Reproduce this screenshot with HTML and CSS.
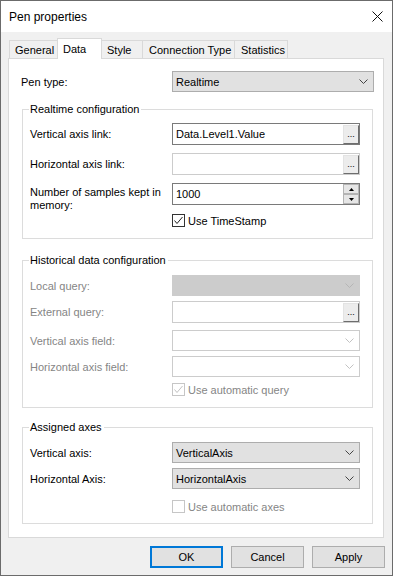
FILE: index.html
```html
<!DOCTYPE html>
<html lang="en">
<head>
    <meta charset="UTF-8">
    <meta name="viewport" content="width=device-width, initial-scale=1.0">
    <title>Pen properties</title>
    <link rel="stylesheet" href="styles.css">
</head>
<body>
    <div class="window">
        <div class="titlebar">
            <span class="title">Pen properties</span>
            <svg class="close" width="11" height="11" viewBox="0 0 11 11"><path d="M0.5 0.5L10.5 10.5M10.5 0.5L0.5 10.5" stroke="#111" stroke-width="1" fill="none"/></svg>
        </div>

        <div class="tabs">
            <div class="tab tab-general">General</div>
            <div class="tab tab-data active">Data</div>
            <div class="tab tab-style">Style</div>
            <div class="tab tab-conn">Connection Type</div>
            <div class="tab tab-stats">Statistics</div>
        </div>

        <div class="panel">
            <div class="pen-type">
                <span class="label">Pen type:</span>
                <div class="combo">
                    <span>Realtime</span>
                    <svg class="chev" width="9" height="5" viewBox="0 0 9 5"><polyline points="0.5,0.5 4.5,4.5 8.5,0.5" fill="none" stroke="#444"/></svg>
                </div>
            </div>

            <!-- realtime -->
            <fieldset class="group group-realtime">
                <legend>Realtime configuration</legend>
                <div class="field">
                    <span class="label">Vertical axis link:</span>
                    <div class="textbox">
                        <span class="value">Data.Level1.Value</span>
                        <span class="dots">...</span>
                    </div>
                </div>
                <div class="field mt-8">
                    <span class="label">Horizontal axis link:</span>
                    <div class="textbox light">
                        <span class="value"></span>
                        <span class="dots">...</span>
                    </div>
                </div>
                <div class="field field-tall mt-8">
                    <span class="label label-top">Number of samples kept in memory:</span>
                    <div class="textbox">
                        <span class="value">1000</span>
                        <span class="spin">
                            <span><svg width="5" height="3" viewBox="0 0 5 3"><polygon points="2.5,0 5,3 0,3" fill="#000"/></svg></span>
                            <span><svg width="5" height="3" viewBox="0 0 5 3"><polygon points="0,0 5,0 2.5,3" fill="#000"/></svg></span>
                        </span>
                    </div>
                </div>
                <div class="field mt-9">
                    <span></span>
                    <div class="check">
                        <span class="box"><svg width="11" height="11" viewBox="0 0 11 11"><polyline points="1.5,5.5 4,8.5 9.5,2" fill="none" stroke="#222"/></svg></span>
                        <span>Use TimeStamp</span>
                    </div>
                </div>
            </fieldset>

            <!-- historical -->
            <fieldset class="group group-history disabled">
                <legend>Historical data configuration</legend>
                <div class="field">
                    <span class="label">Local query:</span>
                    <div class="combo off">
                        <span></span>
                        <svg class="chev" width="9" height="5" viewBox="0 0 9 5"><polyline points="0.5,0.5 4.5,4.5 8.5,0.5" fill="none" stroke="#b5b5b5"/></svg>
                    </div>
                </div>
                <div class="field mt-5">
                    <span class="label">External query:</span>
                    <div class="textbox light">
                        <span class="value"></span>
                        <span class="dots">...</span>
                    </div>
                </div>
                <div class="field mt-7">
                    <span class="label">Vertical axis field:</span>
                    <div class="combo blank">
                        <span></span>
                        <svg class="chev" width="9" height="5" viewBox="0 0 9 5"><polyline points="0.5,0.5 4.5,4.5 8.5,0.5" fill="none" stroke="#c2c2c2"/></svg>
                    </div>
                </div>
                <div class="field mt-5">
                    <span class="label">Horizontal axis field:</span>
                    <div class="combo blank">
                        <span></span>
                        <svg class="chev" width="9" height="5" viewBox="0 0 9 5"><polyline points="0.5,0.5 4.5,4.5 8.5,0.5" fill="none" stroke="#c2c2c2"/></svg>
                    </div>
                </div>
                <div class="field mt-6">
                    <span></span>
                    <div class="check">
                        <span class="box"><svg width="11" height="11" viewBox="0 0 11 11"><polyline points="1.5,5.5 4,8.5 9.5,2" fill="none" stroke="#c2c2c2"/></svg></span>
                        <span>Use automatic query</span>
                    </div>
                </div>
            </fieldset>

            <!-- axes -->
            <fieldset class="group group-axes">
                <legend>Assigned axes</legend>
                <div class="field">
                    <span class="label">Vertical axis:</span>
                    <div class="combo">
                        <span>VerticalAxis</span>
                        <svg class="chev" width="9" height="5" viewBox="0 0 9 5"><polyline points="0.5,0.5 4.5,4.5 8.5,0.5" fill="none" stroke="#444"/></svg>
                    </div>
                </div>
                <div class="field mt-5">
                    <span class="label">Horizontal Axis:</span>
                    <div class="combo">
                        <span>HorizontalAxis</span>
                        <svg class="chev" width="9" height="5" viewBox="0 0 9 5"><polyline points="0.5,0.5 4.5,4.5 8.5,0.5" fill="none" stroke="#444"/></svg>
                    </div>
                </div>
                <div class="field mt-11">
                    <span></span>
                    <div class="check off">
                        <span class="box"></span>
                        <span>Use automatic axes</span>
                    </div>
                </div>
            </fieldset>
        </div>

        <div class="buttons">
            <div class="btn default">OK</div>
            <div class="btn">Cancel</div>
            <div class="btn">Apply</div>
        </div>
    </div>
</body>
</html>
```

FILE: styles.css
```css
* {
    box-sizing: border-box;
}
body {
    margin: 0;
    font-family: "Liberation Sans", Arial, sans-serif;
    font-size: 11px;
    color: #000;
    background-color: #fff;
}
.window {
    width: 393px;
    height: 576px;
    border: 1px solid #6b6b6b;
    background-color: #f0f0f0;
    display: flex;
    flex-direction: column;
}
.titlebar {
    height: 31px;
    flex-shrink: 0;
    background-color: #fff;
    display: flex;
    align-items: center;
    justify-content: space-between;
    padding: 0 9px 0 8px;
}
.title {
    font-size: 12px;
}

/* tabs */
.tabs {
    display: flex;
    align-items: flex-end;
    height: 20px;
    flex-shrink: 0;
    margin-top: 6px;
    padding-left: 8px;
    position: relative;
    z-index: 1;
}
.tab {
    height: 18px;
    border: 1px solid #d9d9d9;
    border-bottom: none;
    background-color: #f0f0f0;
    margin-left: -1px;
    padding-left: 5px;
    display: flex;
    align-items: center;
    white-space: nowrap;
}
.tab.active {
    height: 21px;
    margin-bottom: -1px;
    background-color: #fff;
    padding-bottom: 1px;
}
.tab-general { width: 49px; margin-left: 0; }
.tab-data { width: 45px; }
.tab-style { width: 42px; }
.tab-conn { width: 93px; padding-left: 6px; }
.tab-stats { width: 54px; padding-left: 6px; }

.panel {
    height: 480px;
    flex-shrink: 0;
    margin: 0 8px 0 7px;
    background-color: #fff;
    border: 1px solid #d9d9d9;
    padding: 12px 0 0 12px;
}
.pen-type {
    display: grid;
    grid-template-columns: 151px 202px;
    align-items: center;
    height: 21px;
}

/* group boxes */
.group {
    width: 351px;
    min-width: 0;
    margin: 0 0 0 1px;
    border: 1px solid #dcdcdc;
    padding: 6px 12px 11px 7px;
}
.group legend {
    margin-left: -1px;
    padding: 0 2px 0 1px;
    line-height: 15px;
}
.group-realtime { margin-top: 10px; }
.group-history { margin-top: 14px; padding-top: 7px; }
.group-axes { margin-top: 12px; padding-top: 7px; padding-bottom: 10px; }

.field {
    display: grid;
    grid-template-columns: 142px 188px;
    align-items: center;
}
.field-tall {
    grid-template-rows: 22px;
}
.label-top {
    align-self: start;
    padding-top: 3px;
    line-height: 13px;
    padding-right: 8px;
}
.disabled .label,
.disabled .check {
    color: #858585;
}
.mt-5 { margin-top: 5px; }
.mt-6 { margin-top: 6px; }
.mt-7 { margin-top: 7px; }
.mt-8 { margin-top: 8px; }
.mt-9 { margin-top: 9px; }
.mt-11 { margin-top: 11px; }

/* inputs */
.textbox {
    height: 22px;
    border: 1px solid #7a7a7a;
    background-color: #fff;
    display: flex;
    align-items: center;
    padding-left: 3px;
}
.textbox.light {
    border-color: #cccccc;
}
.textbox .value {
    flex: 1;
}
.dots {
    align-self: flex-start;
    width: 16px;
    height: 19px;
    margin-top: 1px;
    border: 1px solid;
    border-color: #e3e3e3 #6d6d6d #6d6d6d #e3e3e3;
    background-color: #ececec;
    font-size: 9px;
    line-height: 13px;
    text-align: center;
    display: flex;
    align-items: flex-end;
    justify-content: center;
    padding-bottom: 2px;
}
.spin {
    align-self: stretch;
    width: 16px;
    display: flex;
    flex-direction: column;
}
.spin span {
    height: 10px;
    border: 1px solid #b4b4b4;
    background-color: #e6e6e6;
    display: flex;
    align-items: center;
    justify-content: center;
}
.combo {
    height: 21px;
    border: 1px solid #adadad;
    background-color: #e1e1e1;
    display: flex;
    align-items: center;
    justify-content: space-between;
    padding: 0 5px 0 3px;
}
.combo.off {
    background-color: #cccccc;
    border-color: #cccccc;
}
.combo.blank {
    background-color: #fff;
    border-color: #cccccc;
}

/* checkboxes */
.check {
    display: flex;
    align-items: center;
    gap: 3px;
    height: 13px;
}
.check .box {
    width: 13px;
    height: 13px;
    border: 1px solid #333;
    background-color: #fff;
    display: flex;
}
.disabled .check .box,
.check.off .box {
    border-color: #c6c6c6;
}
.check.off {
    color: #858585;
}

/* dialog buttons */
.buttons {
    display: flex;
    justify-content: flex-end;
    gap: 8px;
    margin-top: 8px;
    padding-right: 7px;
}
.btn {
    width: 73px;
    height: 22px;
    border: 1px solid #adadad;
    background-color: #e1e1e1;
    display: flex;
    align-items: center;
    justify-content: center;
}
.btn.default {
    border: 2px solid #0078d7;
}
```
